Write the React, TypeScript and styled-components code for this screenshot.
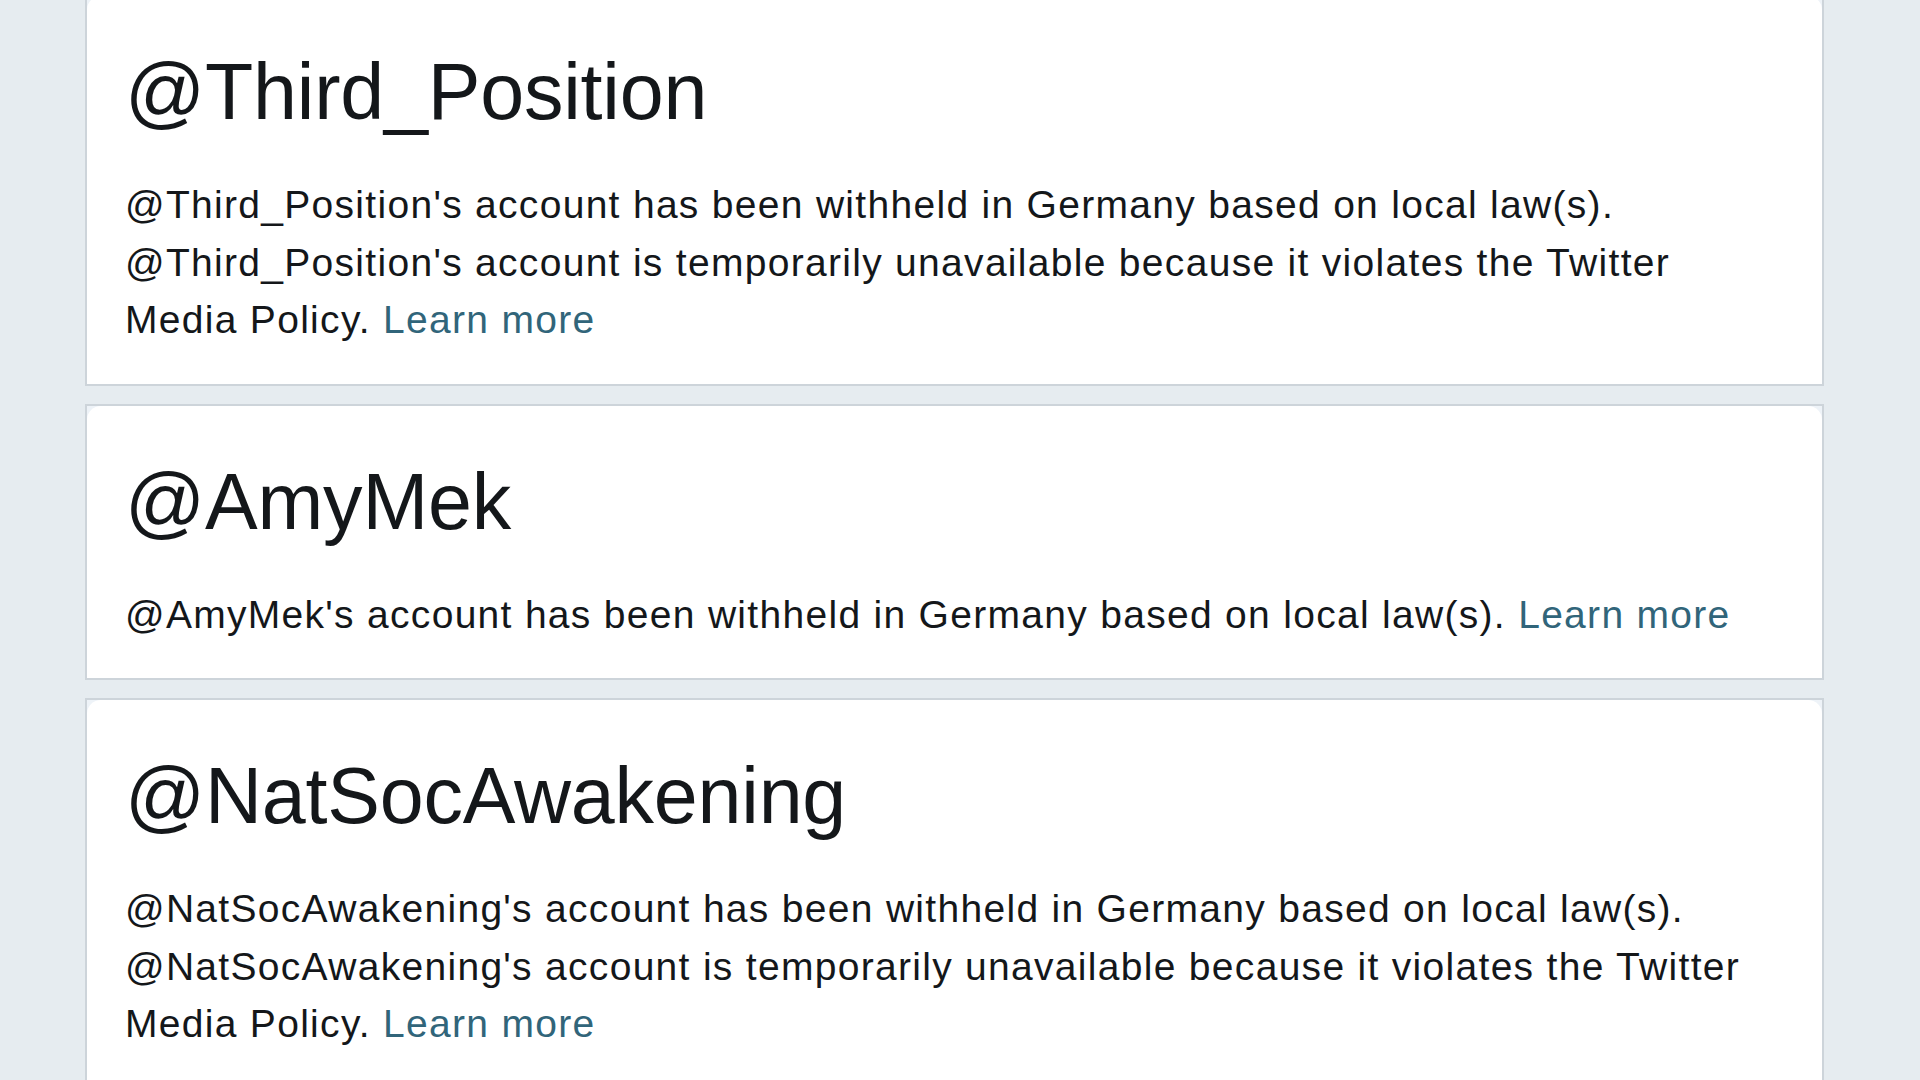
import styled, { createGlobalStyle } from "styled-components"

type Withheld = {
    handle: string
    reasons: string[]
}

const accounts: Withheld[] = [
    {
        handle: "Third_Position",
        reasons: [
            "account has been withheld in Germany based on local law(s).",
            "account is temporarily unavailable because it violates the Twitter Media Policy.",
        ],
    },
    {
        handle: "AmyMek",
        reasons: ["account has been withheld in Germany based on local law(s)."],
    },
    {
        handle: "NatSocAwakening",
        reasons: [
            "account has been withheld in Germany based on local law(s).",
            "account is temporarily unavailable because it violates the Twitter Media Policy.",
        ],
    },
]

const GlobalStyle = createGlobalStyle`
    html, body {
        margin: 0;
        padding: 0;
        background: #e6ecf0;
        height: 100%;
        overflow: hidden;
    }
    body {
        font-family: "Liberation Sans", Arial, Helvetica, sans-serif;
        color: #14171a;
    }
`

const WithheldCard = ({ handle, reasons }: Withheld) => (
    <Card>
        <Inner>
            <Handle>{`@${handle}`}</Handle>
            <Message>
                {reasons.map((r, i) =>
                    i < reasons.length - 1 ? (
                        <Line key={i}>{`@${handle}'s ${r}`}</Line>
                    ) : (
                        <Line key={i}>
                            {`@${handle}'s ${r} `}
                            <LearnMore href="#">Learn more</LearnMore>
                        </Line>
                    )
                )}
            </Message>
        </Inner>
    </Card>
)

export default function App() {
    return (
        <>
            <GlobalStyle />
            <Timeline>
                {accounts.map((a) => (
                    <WithheldCard key={a.handle} {...a} />
                ))}
            </Timeline>
        </>
    )
}

const Timeline = styled.div`
    display: flex;
    flex-direction: column;
    gap: 18px;
    width: 1739px;
    margin: -6px 0 0 85px;
`

const Card = styled.div`
    border: 2px solid #cdd4da;
    background: #eef3f8;
`

const Inner = styled.div`
    background: #ffffff;
    border-radius: 14px 14px 0 0;
    padding: 56px 40px 35px 38px;
`

const Handle = styled.h2`
    margin: 0 0 45px;
    font-size: 79px;
    line-height: 79px;
    font-weight: 400;
    letter-spacing: -0.2px;
    color: #14171a;
`

const Message = styled.div`
    font-size: 39px;
    line-height: 57.5px;
    letter-spacing: 1.3px;
    color: #14171a;
`

const Line = styled.p`
    margin: 0;
`

const LearnMore = styled.a`
    color: #31657a;
    text-decoration: none;
`
